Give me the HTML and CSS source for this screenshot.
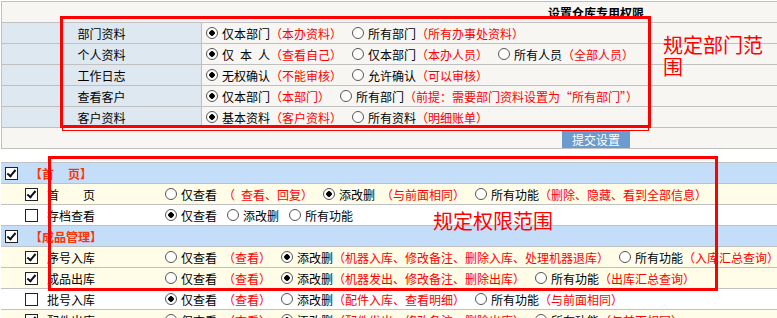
FILE: index.html
```html
<!DOCTYPE html>
<html lang="zh-CN">
<head>
    <meta charset="UTF-8">
    <meta name="viewport" content="width=device-width, initial-scale=1.0">
    <title>设置仓库专用权限</title>
    <link rel="stylesheet" href="styles.css">
</head>
<body>
<div class="page">
    <!-- 部门范围 -->
    <table class="dept-table">
        <colgroup><col class="col-name"><col></colgroup>
        <tr class="head"><td colspan="2">设置仓库专用权限</td></tr>
        <tr>
            <td class="name">部门资料</td>
            <td><div class="opts">
                <label><input type="radio" name="bmzl" checked>仅本部门</label><span class="note">（本办资料）</span>
                <label><input type="radio" name="bmzl">所有部门</label><span class="note">（所有办事处资料）</span>
            </div></td>
        </tr>
        <tr>
            <td class="name">个人资料</td>
            <td><div class="opts">
                <label><input type="radio" name="grzl" checked>仅<i class="sp"></i>本<i class="sp"></i>人</label><span class="note">（查看自己）</span>
                <label><input type="radio" name="grzl">仅本部门</label><span class="note">（本办人员）</span>
                <label><input type="radio" name="grzl">所有人员</label><span class="note">（全部人员）</span>
            </div></td>
        </tr>
        <tr>
            <td class="name">工作日志</td>
            <td><div class="opts">
                <label><input type="radio" name="gzrz" checked>无权确认</label><span class="note">（不能审核）</span>
                <label><input type="radio" name="gzrz">允许确认</label><span class="note">（可以审核）</span>
            </div></td>
        </tr>
        <tr>
            <td class="name">查看客户</td>
            <td><div class="opts">
                <label><input type="radio" name="ckkh" checked>仅本部门</label><span class="note">（本部门）</span>
                <label><input type="radio" name="ckkh">所有部门</label><span class="note">（前提：需要部门资料设置为“所有部门”）</span>
            </div></td>
        </tr>
        <tr>
            <td class="name">客户资料</td>
            <td><div class="opts">
                <label><input type="radio" name="khzl" checked>基本资料</label><span class="note">（客户资料）</span>
                <label><input type="radio" name="khzl">所有资料</label><span class="note">（明细账单）</span>
            </div></td>
        </tr>
        <tr class="submit-row"><td colspan="2"><button type="submit">提交设置</button></td></tr>
    </table>

    <!-- 功能权限 -->
    <table class="perm-table">
        <colgroup><col class="col-item"><col></colgroup>
        <tr class="group">
            <td colspan="2"><label class="group-title"><input type="checkbox" checked>【首<i class="sp-g"></i>页】</label></td>
        </tr>
        <tr class="on">
            <td><label class="item"><input type="checkbox" checked>首<i class="sp-n"></i>页</label></td>
            <td><div class="opts">
                <label><input type="radio" name="sy">仅查看</label><span class="note gap">（<i class="sp"></i>查看、回复）</span>
                <label><input type="radio" name="sy" checked>添改删</label><span class="note gap">（与前面相同）</span>
                <label><input type="radio" name="sy">所有功能</label><span class="note">（删除、隐藏、看到全部信息）</span>
            </div></td>
        </tr>
        <tr>
            <td><label class="item"><input type="checkbox">存档查看</label></td>
            <td><div class="opts">
                <label><input type="radio" name="cd" checked>仅查看</label>
                <label><input type="radio" name="cd">添改删</label>
                <label><input type="radio" name="cd">所有功能</label>
            </div></td>
        </tr>
        <tr class="group">
            <td colspan="2"><label class="group-title"><input type="checkbox" checked>【成品管理】</label></td>
        </tr>
        <tr class="on">
            <td><label class="item"><input type="checkbox" checked>序号入库</label></td>
            <td><div class="opts">
                <label><input type="radio" name="xhrk">仅查看</label><span class="note gap">（查看）</span>
                <label><input type="radio" name="xhrk" checked>添改删</label><span class="note">（机器入库、修改备注、删除入库、处理机器退库）</span>
                <label><input type="radio" name="xhrk">所有功能</label><span class="note">（入库汇总查询）</span>
            </div></td>
        </tr>
        <tr class="on">
            <td><label class="item"><input type="checkbox" checked>成品出库</label></td>
            <td><div class="opts">
                <label><input type="radio" name="cpck">仅查看</label><span class="note gap">（查看）</span>
                <label><input type="radio" name="cpck" checked>添改删</label><span class="note">（机器发出、修改备注、删除出库）</span>
                <label><input type="radio" name="cpck">所有功能</label><span class="note">（出库汇总查询）</span>
            </div></td>
        </tr>
        <tr>
            <td><label class="item"><input type="checkbox">批号入库</label></td>
            <td><div class="opts">
                <label><input type="radio" name="phrk" checked>仅查看</label><span class="note gap">（查看）</span>
                <label><input type="radio" name="phrk">添改删</label><span class="note">（配件入库、查看明细）</span>
                <label><input type="radio" name="phrk">所有功能</label><span class="note">（与前面相同）</span>
            </div></td>
        </tr>
        <tr class="on">
            <td><label class="item"><input type="checkbox" checked>配件出库</label></td>
            <td><div class="opts">
                <label><input type="radio" name="pjck">仅查看</label><span class="note gap">（查看）</span>
                <label><input type="radio" name="pjck" checked>添改删</label><span class="note">（配件发出、修改备注、删除出库）</span>
                <label><input type="radio" name="pjck">所有功能</label><span class="note">（与前面相同）</span>
            </div></td>
        </tr>
    </table>

    <!-- 标注 -->
    <div class="mark mark-dept"></div>
    <div class="tip tip-dept">规定部门范围</div>
    <div class="mark mark-perm"></div>
    <div class="tip tip-perm">规定权限范围</div>
</div>
</body>
</html>
```

FILE: styles.css
```css
html, body {
    margin: 0;
    padding: 0;
    background: #fff;
    overflow: hidden;
}
body {
    font-family: "Noto Sans CJK SC", sans-serif;
    font-size: 12px;
    color: #000;
}
.page {
    position: relative;
    padding: 1px 0 0 1px;
}

/* inputs */
input[type=checkbox] {
    -webkit-appearance: none;
    appearance: none;
    box-sizing: border-box;
    position: relative;
    flex: none;
    width: 13px;
    height: 13px;
    margin: 0;
    border: 1px solid #222;
    background: #fff;
}
input[type=checkbox]:checked::after {
    content: "";
    position: absolute;
    left: 3px;
    top: 0;
    width: 3px;
    height: 7px;
    border: solid #111;
    border-width: 0 2px 2px 0;
    transform: rotate(40deg);
}
input[type=radio] {
    -webkit-appearance: none;
    appearance: none;
    box-sizing: border-box;
    flex: none;
    width: 12px;
    height: 12px;
    margin: 0 4px 0 0;
    border: 1px solid #555;
    border-radius: 50%;
    background: #fff;
}
input[type=radio]:checked {
    background: radial-gradient(circle, #000 0 2.5px, #fff 3px);
}

table {
    border-collapse: collapse;
    table-layout: fixed;
    width: 1190px;
}
td {
    padding: 0;
    height: 20px;
    white-space: nowrap;
}

/* top table */
.dept-table td {
    border: 1px solid #c0c0c0;
    background: #f7f6f3;
}
.dept-table .col-name {
    width: 200px;
}
.dept-table .name {
    background: #dee8f0;
    text-align: center;
}
.dept-table .head td {
    font-weight: bold;
    text-align: center;
}
.submit-row td {
    text-align: center;
}
.submit-row button {
    width: 68px;
    height: 17px;
    padding: 0;
    border: 0;
    background: #6b9bcf;
    color: #fff;
    font: 12px "Noto Sans CJK SC", sans-serif;
    vertical-align: middle;
}

/* option lists */
.opts {
    display: flex;
    align-items: center;
}
.opts label {
    display: flex;
    align-items: center;
    margin-left: 10px;
}
.opts label:first-child {
    margin-left: 4px;
}
.note {
    color: #f00;
}
.note.gap {
    margin-left: 6px;
}
.sp {
    display: inline-block;
    width: 6px;
}

/* bottom table */
.perm-table {
    margin-top: 13px;
}
.perm-table .col-item {
    width: 160px;
}
.perm-table td {
    border-top: 1px solid #c0c0c0;
    border-bottom: 1px solid #c0c0c0;
}
.perm-table .group td {
    background: #c4def9;
}
.perm-table .on td {
    background: #fffde8;
}
.group-title {
    display: flex;
    align-items: center;
    padding-left: 4px;
    color: #ff3300;
    font-weight: bold;
}
.group-title input[type=checkbox] {
    margin-right: 12px;
}
.sp-g {
    display: inline-block;
    width: 14px;
}
.item {
    display: flex;
    align-items: center;
    padding-left: 24px;
}
.item input[type=checkbox] {
    margin-right: 9px;
}
.sp-n {
    display: inline-block;
    width: 24px;
}

/* red annotations */
.mark {
    position: absolute;
    box-sizing: border-box;
    border: 3px solid #f00;
}
.mark-dept {
    left: 60px;
    top: 16px;
    width: 591px;
    height: 112px;
}
.mark-dept::after {
    content: "";
    position: absolute;
    left: -1px;
    top: -2px;
    right: -1px;
    bottom: -6px;
    border: 1px solid #f00;
}
.mark-perm {
    left: 48px;
    top: 156px;
    width: 670px;
    height: 135px;
}
.tip {
    position: absolute;
    color: #f00;
    font-size: 20px;
    line-height: 22px;
}
.tip-dept {
    left: 663px;
    top: 34px;
    width: 110px;
}
.tip-perm {
    left: 433px;
    top: 210px;
}
```
